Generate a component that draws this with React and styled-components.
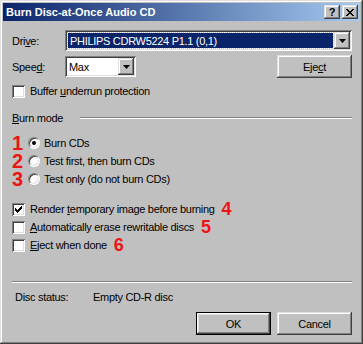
import styled, { createGlobalStyle } from "styled-components";

const GlobalStyle = createGlobalStyle`
  html, body {
    margin: 0;
    padding: 0;
    background: #c0c0c0;
  }
  body {
    font-family: "Liberation Sans", Arial, sans-serif;
    font-size: 11px;
    color: #000;
  }
`;

const raised = `
  background: #c0c0c0;
  box-shadow: inset -1px -1px #404040, inset 1px 1px #dfdfdf,
    inset -2px -2px #808080, inset 2px 2px #ffffff;
`;

const sunken = `
  box-shadow: inset 1px 1px #808080, inset -1px -1px #ffffff,
    inset 2px 2px #404040, inset -2px -2px #dfdfdf;
`;

const Window = styled.div`
  width: 363px;
  height: 344px;
  box-sizing: border-box;
  padding: 3px;
  display: flex;
  flex-direction: column;
  ${raised}
`;

const TitleBar = styled.div`
  height: 18px;
  display: flex;
  align-items: center;
  padding: 0 2px 0 3px;
  background: linear-gradient(to right, #0a246a, #a6caf0);
  color: #fff;
  font-weight: bold;
`;

const TitleText = styled.span`
  flex: 1;
`;

const TitleButton = styled.div`
  width: 16px;
  height: 14px;
  box-sizing: border-box;
  margin-left: ${(p) => p.gap || 0}px;
  display: flex;
  align-items: center;
  justify-content: center;
  color: #000;
  font-weight: bold;
  font-size: 11px;
  ${raised}
`;

const Body = styled.div`
  display: flex;
  flex-direction: column;
  padding: 0 8px 0 9px;
  letter-spacing: -0.3px;
`;

const Row = styled.div`
  display: flex;
  align-items: center;
  height: ${(p) => p.h || 18}px;
  margin-top: ${(p) => p.mt || 0}px;
`;

const Label = styled.span`
  width: ${(p) => p.w}px;
  padding-left: ${(p) => p.pl || 0}px;
  flex-shrink: 0;
`;

const U = styled.span`
  text-decoration: underline;
`;

const Combo = styled.div`
  display: flex;
  box-sizing: border-box;
  height: 21px;
  padding: 2px;
  background: #fff;
  width: ${(p) => (p.w ? `${p.w}px` : "auto")};
  flex: ${(p) => (p.w ? "none" : 1)};
  ${sunken}
`;

const ComboValue = styled.div`
  flex: 1;
  display: flex;
  align-items: center;
  padding-left: 2px;
  margin: ${(p) => (p.selected ? "1px" : "0")};
  background: ${(p) => (p.selected ? "#0a246a" : "transparent")};
  color: ${(p) => (p.selected ? "#fff" : "#000")};
  outline: ${(p) => (p.selected ? "1px dotted #c8c8c8" : "none")};
`;

const DropButton = styled.div`
  width: 16px;
  display: flex;
  align-items: center;
  justify-content: center;
  ${raised}
`;

const Button = styled.div`
  width: 75px;
  height: 23px;
  box-sizing: border-box;
  display: flex;
  align-items: center;
  justify-content: center;
  ${raised}
  ${(p) =>
    p.primary &&
    `box-shadow: inset 0 0 0 1px #000, inset -2px -2px #404040, inset 2px 2px #ffffff,
      inset -3px -3px #808080, inset 3px 3px #dfdfdf;`}
`;

const Spacer = styled.div`
  flex: 1;
`;

const Check = styled.div`
  width: 13px;
  height: 13px;
  box-sizing: border-box;
  background: #fff;
  flex-shrink: 0;
  margin-right: 5px;
  ${sunken}
  svg {
    display: block;
  }
`;

const Radio = styled.div`
  width: 12px;
  height: 12px;
  box-sizing: border-box;
  border-radius: 50%;
  background: #fff;
  border: 1px solid;
  border-color: #808080 #ffffff #ffffff #808080;
  box-shadow: inset 1px 1px #404040, inset -1px -1px #dfdfdf;
  display: flex;
  align-items: center;
  justify-content: center;
  margin-right: 4px;
  flex-shrink: 0;

  &::after {
    content: "";
    width: 4px;
    height: 4px;
    border-radius: 50%;
    background: ${(p) => (p.on ? "#000" : "transparent")};
  }
`;

const Mark = styled.span`
  font-family: "Liberation Sans", Arial, sans-serif;
  font-weight: bold;
  color: #ee1414;
  font-size: ${(p) => p.size}px;
  line-height: 18px;
  letter-spacing: 0;
  margin-left: ${(p) => p.ml || 0}px;
`;

const MarkCol = styled.div`
  width: 21px;
  margin-left: -5px;
  display: flex;
  justify-content: center;
`;

const Group = styled.div`
  display: flex;
  align-items: center;
  height: 14px;
  margin-top: 11px;
`;

const GroupLine = styled.div`
  flex: 1;
  height: 0;
  margin-left: 17px;
  border-top: 1px solid #808080;
  border-bottom: 1px solid #ffffff;
`;

const Separator = styled.div`
  margin-top: ${(p) => p.mt}px;
  border-top: 1px solid #808080;
  border-bottom: 1px solid #ffffff;
`;

const ButtonRow = styled.div`
  display: flex;
  justify-content: flex-end;
  gap: 6px;
  margin-top: 8px;
`;

const RadioList = styled.div`
  margin-top: 9px;
`;

const Arrow = () => (
  <svg width="7" height="4" viewBox="0 0 7 4">
    <polygon points="0,0 7,0 3.5,4" fill="#000" />
  </svg>
);

const CloseGlyph = () => (
  <svg width="8" height="7" viewBox="0 0 8 7" shapeRendering="crispEdges">
    <path d="M0 0h2v1H0zM6 0h2v1H6zM1 1h2v1H1zM5 1h2v1H5zM2 2h4v1H2zM3 3h2v1H3zM2 4h4v1H2zM1 5h2v1H1zM5 5h2v1H5zM0 6h2v1H0zM6 6h2v1H6z" fill="#000" />
  </svg>
);

const CheckMark = () => (
  <svg width="13" height="13" viewBox="0 0 13 13" shapeRendering="crispEdges">
    <path d="M9 3h1v1H9zM8 4h2v1H8zM3 5h1v1H3zM7 5h3v1H7zM3 6h2v1H3zM6 6h3v1H6zM3 7h5v1H3zM4 8h3v1H4zM5 9h1v1H5z" fill="#000" />
  </svg>
);

const CheckRow = ({ checked, children, mark, mt }) => (
  <Row h={18} mt={mt}>
    <Check>{checked && <CheckMark />}</Check>
    <span>{children}</span>
    {mark && (
      <Mark size={18} ml={7}>
        {mark}
      </Mark>
    )}
  </Row>
);

const RadioRow = ({ on, mark, children }) => (
  <Row h={18}>
    <MarkCol>
      <Mark size={20}>{mark}</Mark>
    </MarkCol>
    <Radio on={on} />
    <span>{children}</span>
  </Row>
);

export default function App() {
  return (
    <>
      <GlobalStyle />
      <Window>
        <TitleBar>
          <TitleText>Burn Disc-at-Once Audio CD</TitleText>
          <TitleButton>?</TitleButton>
          <TitleButton gap={2}>
            <CloseGlyph />
          </TitleButton>
        </TitleBar>
        <Body>
          <Row h={21} mt={9}>
            <Label w={53}>
              Dri<U>v</U>e:
            </Label>
            <Combo>
              <ComboValue selected>PHILIPS CDRW5224 P1.1 (0,1)</ComboValue>
              <DropButton>
                <Arrow />
              </DropButton>
            </Combo>
          </Row>
          <Row h={23} mt={4}>
            <Label w={53}>
              Spee<U>d</U>:
            </Label>
            <Combo w={71}>
              <ComboValue>Max</ComboValue>
              <DropButton>
                <Arrow />
              </DropButton>
            </Combo>
            <Spacer />
            <Button>
              Eje<U>c</U>t
            </Button>
          </Row>
          <CheckRow mt={4}>
            Buffer <U>u</U>nderrun protection
          </CheckRow>
          <Group>
            <span>
              <U>B</U>urn mode
            </span>
            <GroupLine />
          </Group>
          <RadioList>
            <RadioRow on mark="1">
              Burn CDs
            </RadioRow>
            <RadioRow mark="2">Test first, then burn CDs</RadioRow>
            <RadioRow mark="3">Test only (do not burn CDs)</RadioRow>
          </RadioList>
          <CheckRow checked mark="4" mt={12}>
            Render <U>t</U>emporary image before burning
          </CheckRow>
          <CheckRow mark="5">
            <U>A</U>utomatically erase rewritable discs
          </CheckRow>
          <CheckRow mark="6">
            <U>E</U>ject when done
          </CheckRow>
          <Separator mt={27} />
          <Row h={14} mt={7}>
            <Label w={78} pl={3}>
              Disc status:
            </Label>
            <span>Empty CD-R disc</span>
          </Row>
          <ButtonRow>
            <Button primary>OK</Button>
            <Button>Cancel</Button>
          </ButtonRow>
        </Body>
      </Window>
    </>
  );
}
